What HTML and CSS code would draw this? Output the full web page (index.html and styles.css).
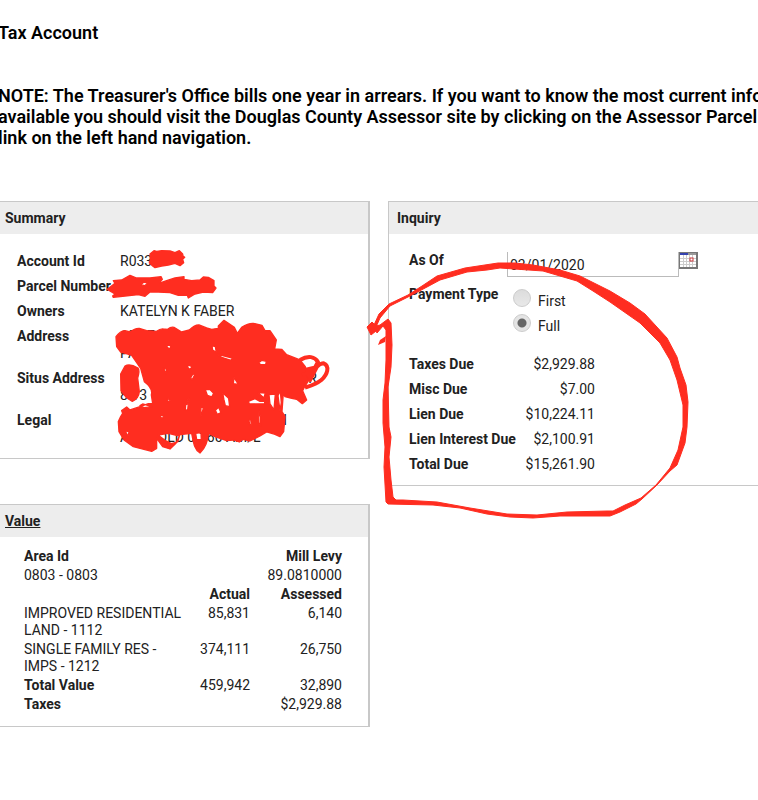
FILE: index.html
```
<!DOCTYPE html>
<html lang="en">
<head>
    <meta charset="UTF-8">
    <meta name="viewport" content="width=device-width, initial-scale=1.0">
    <title>Tax Account</title>
    <link rel="stylesheet" href="styles.css">
</head>
<body>
    <div class="page">
        <h1>Tax Account</h1>
        <p class="note">NOTE: The Treasurer's Office bills one year in arrears. If you want to know the most current information<br>available you should visit the Douglas County Assessor site by clicking on the Assessor Parcel Number<br>link on the left hand navigation.</p>
        <div class="columns">
            <div class="column">
                <section class="panel">
                    <h2>Summary</h2>
                    <table class="summary">
                        <tr><th>Account Id</th><td>R033</td></tr>
                        <tr><th>Parcel Number</th><td></td></tr>
                        <tr><th>Owners</th><td>KATELYN K FABER</td></tr>
                        <tr><th>Address</th><td>10 17<br>PA</td></tr>
                        <tr><th>Situs Address</th><td><span class="tail">R</span>8 13</td></tr>
                        <tr><th>Legal</th><td><span class="tail short">H</span>A &nbsp; L &nbsp; OLD 0.360 AM/L</td></tr>
                    </table>
                </section>
                <section class="panel">
                    <h2><a href="#value">Value</a></h2>
                    <table class="value" id="value">
                        <tr><th>Area Id</th><th></th><th>Mill Levy</th></tr>
                        <tr><td>0803 - 0803</td><td></td><td>89.0810000</td></tr>
                        <tr><th></th><th>Actual</th><th>Assessed</th></tr>
                        <tr><td>IMPROVED RESIDENTIAL<br>LAND - 1112</td><td>85,831</td><td>6,140</td></tr>
                        <tr><td>SINGLE FAMILY RES -<br>IMPS - 1212</td><td>374,111</td><td>26,750</td></tr>
                        <tr><th>Total Value</th><td>459,942</td><td>32,890</td></tr>
                        <tr><th>Taxes</th><td></td><td>$2,929.88</td></tr>
                    </table>
                </section>
            </div>
            <div class="column">
                <section class="panel inquiry-panel">
                    <h2>Inquiry</h2>
                    <form class="inquiry">
                        <label class="name" for="as-of">As Of</label>
                        <div class="date">
                            <input type="text" id="as-of" value="03/01/2020">
                            <button type="button" aria-label="Choose date">
                                <svg width="19" height="17" viewBox="0 0 19 17">
                                    <rect width="19" height="17" fill="#777"/>
                                    <rect x="1" y="3" width="16" height="12" fill="#fff"/>
                                    <path d="M1 6.5h16M1 9.5h16M1 12.5h16M4.500 3v12M7.500 3v12M10.500 3v12M13.500 3v12" stroke="#ccc"/>
                                    <rect x="1" y="1" width="8" height="2" fill="#3442b0"/>
                                    <rect x="9" y="1" width="8" height="2" fill="#999"/>
                                    <rect x="11" y="6" width="3" height="3" fill="#fff" stroke="#c8373a"/>
                                </svg>
                            </button>
                        </div>
                        <span class="name" id="payment-type">Payment Type</span>
                        <div class="choices" role="radiogroup" aria-labelledby="payment-type">
                            <label><input type="radio" name="payment"> <span>First</span></label>
                            <label><input type="radio" name="payment" checked> <span>Full</span></label>
                        </div>
                    </form>
                    <table class="dues">
                        <tr><th>Taxes Due</th><td>$2,929.88</td></tr>
                        <tr><th>Misc Due</th><td>$7.00</td></tr>
                        <tr><th>Lien Due</th><td>$10,224.11</td></tr>
                        <tr><th>Lien Interest Due</th><td>$2,100.91</td></tr>
                        <tr><th>Total Due</th><td>$15,261.90</td></tr>
                    </table>
                </section>
            </div>
        </div>
    </div>

    <!-- red marker drawn over the page -->
    <svg class="marker" width="758" height="800" viewBox="0 0 758 800" aria-hidden="true">
        <path stroke="#ff2d20" stroke-linejoin="round" d="M374 325L379 314L389 304L408 295L422 286L437 276L465 268L498 263L515 263L533 265L560 270L580 276L610 291L630 303L645 314L667 338L677 357L680 368L686 385L688 402L687 427L685 443L677 465L670 471L657 485L642 499L636 504L620 512L610 516L560 516L533 518L510 517L487 514L460 508L433 505L388 504L386 502L384 467L385 447L383 423L383 400L385 383L386 360L386 330L383 326L377 333L376 331L371 335L367 327L372 322L376 326L380 325L388 319L391 323L392 345L391 367L388 387L389 427L391 437L389 457L391 480L393 497L396 500L403 500L437 502L470 508L507 514L537 515L567 512L607 511L613 511L625 505L641 498L656 485L670 468L678 450L683 427L683 405L677 380L670 360L660 343L640 323L610 302L593 291L577 281L560 276L543 271L500 268L487 270L467 272L440 280L427 287L408 297L390 306L380 318L376 327Z"/>
        <path d="M378 345L380 340L386 336L385 342Z"/>
        <g class="scribble" transform="translate(100 240) scale(.3333)" fill-rule="evenodd">
            <path d="M150 42L162 32L170 34L185 32L210 33L225 38L238 32L248 42L249 48L254 52L248 58L251 68L240 77L225 70L205 75L185 78L165 83L158 78L148 68L152 58Z"/>
            <path d="M22 148L45 130L40 122L65 120L90 106L110 114L150 114L183 110L187 118L176 130L200 122L225 114L252 110L252 118L275 122L300 120L310 111L325 112L342 122L342 138L348 144L338 158L310 156L285 162L265 174L262 166L235 166L210 158L175 156L150 156L135 169L115 164L75 168L40 172L38 168L45 162ZM122 134L132 126L144 129L134 137Z"/>
            <path d="M75 378Q90 370 114 384Q120 392 113 414L118 455Q116 476 97 484Q82 476 77 470L63 452L62 402Z"/>
            <path d="M48 290Q60 273 75 272L90 276Q105 264 118 265L140 272L170 274Q180 266 190 267L203 268Q212 260 222 262L245 276L268 270Q285 254 297 255L320 264L335 268L355 265L355 258L372 241L403 262L412 280L425 262Q445 249 460 250L486 256L495 272L510 272L529 300L524 327L545 328L560 344L600 360L616 380L627 420L613 442L608 452L620 480L607 491L590 478L572 474L555 470L550 460L546 515L555 530L551 575L540 590L525 583L500 576L480 588L450 603L430 598L418 606L400 600L380 602L345 590L326 580C322 600 320 620 300 639C282 628 280 605 275 580L240 584L228 610L210 627L188 620L170 595L170 625L155 634L100 620L72 600L57 575L55 545L62 530L68 520L65 512L80 501L90 510L120 500L145 491L158 490L154 465Q160 445 133 425L122 385L94 345L62 336L50 320Z
                M75 572L87 576L84 589ZM128 492L120 497L132 503L156 500ZM174 585L195 601L214 611L233 606L238 588L205 580ZM287 580L290 599L304 599L303 578ZM200 315L213 317L209 328L202 322ZM336 317L346 320L349 337L338 330ZM350 342L397 354L393 361L365 352ZM261 377L269 376L277 382L267 388ZM272 414L279 401L284 405L276 420ZM402 412L415 433L400 431ZM476 368L486 361L499 364L497 374L482 374ZM316 449L330 449L341 460L335 471L322 466ZM368 458L386 475L389 500L376 497L372 480ZM445 484L465 476L480 484L494 483L494 491L448 492ZM474 458L496 459L492 474ZM507 464L526 462L522 510L510 492ZM534 467L541 452L544 488L540 512ZM346 511L356 502L363 518L352 523ZM447 542L452 536L454 556L449 554ZM476 510L482 532L482 557L477 548ZM303 500L310 505L302 532ZM257 495L265 490L263 511L256 509ZM261 481L269 475L264 485ZM180 527L191 525L187 538ZM190 384L200 388L199 401ZM202 475L211 480L205 489Z"/>
            <path class="loop" d="M600 360C625 345 645 350 654 366C646 388 625 402 606 405M625 414C640 390 655 370 671 370C690 378 683 403 664 420C648 433 630 438 615 443M615 390L650 382L628 424"/>
        </g>
    </svg>
</body>
</html>
```
FILE: styles.css
```
* {
    box-sizing: border-box;
}
body {
    margin: 0;
    font-family: Roboto, Arial, sans-serif;
    font-size: 14px;
    line-height: 17px;
    color: #212121;
    background: #fff;
    overflow: hidden;
    position: relative;
}
.page {
    margin: 0 -2px;
    padding-top: 22px;
}
h1, .note {
    margin: 0;
    font-size: 18px;
    line-height: 21px;
    font-weight: 600;
    color: #000;
}
.note {
    margin: 42px 0 53px;
    white-space: nowrap;
}
.columns {
    display: grid;
    grid-template-columns: 1fr 1fr;
    gap: 18px;
    align-items: start;
}
.column {
    display: grid;
    gap: 45px;
}
.panel {
    border: 1px solid #c8c8c8;
    border-right-width: 2px;
}
.panel h2 {
    margin: 0;
    padding: 8px 6px 7px;
    font-size: 14px;
    line-height: 17px;
    background: #ededed;
}
.panel h2 a {
    color: inherit;
}
.inquiry-panel h2 {
    padding: 8px 8px 7px;
}
table {
    border-collapse: collapse;
}
th, td {
    padding: 0;
    text-align: left;
    vertical-align: top;
}
.summary {
    margin: 15px 18px 8px;
}
.summary th, .summary td {
    padding: 4px 0;
}
.summary th {
    width: 103px;
    white-space: nowrap;
}
.tail {
    display: block;
    width: 197px;
    text-align: right;
}
.tail.short {
    width: 167px;
}
.value {
    width: calc(100% - 51px);
    margin: 11px 26px 11px 25px;
}
.value th, .value td {
    padding-bottom: 2px;
    text-align: right;
}
.value th:last-child, .value td:last-child {
    width: 92px;
}
.value tr > :first-child {
    text-align: left;
}
.inquiry {
    display: grid;
    grid-template-columns: 98px 1fr;
    row-gap: 9px;
    padding: 18px 20px 0;
}
.name {
    font-weight: bold;
}
.date {
    display: flex;
    align-items: flex-start;
}
.date input {
    width: 172px;
    height: 25px;
    padding: 3px 2px 2px;
    border: 1px solid #bbb;
    border-top: 0;
    font-family: inherit;
    font-size: 14px;
    color: #212121;
}
.date button {
    padding: 0;
    border: 0;
    background: none;
}
.date svg {
    display: block;
}
.choices label {
    display: flex;
    height: 25px;
    gap: 7px;
    padding-left: 6px;
}
.choices span {
    padding-top: 7px;
}
.choices input {
    appearance: none;
    width: 18px;
    height: 18px;
    margin: 3px 0;
    border: 1px solid #ccc;
    border-radius: 50%;
    background: linear-gradient(#dcdcdc, #e8e8e8);
}
.choices input:checked {
    background: radial-gradient(circle, #666 4px, #e4e4e4 5px);
}
.dues {
    width: 186px;
    margin: 16px 20px 8px;
}
.dues th, .dues td {
    padding: 4px 0;
    white-space: nowrap;
}
.dues td {
    text-align: right;
}
.marker {
    position: absolute;
    left: 0;
    top: 0;
    width: 100%;
    height: 800px;
    fill: #ff2d20;
    pointer-events: none;
}
.scribble {
    stroke: #ff2d20;
    stroke-width: 4;
    stroke-linejoin: round;
}
.loop {
    fill: none;
    stroke-width: 12;
}
```
